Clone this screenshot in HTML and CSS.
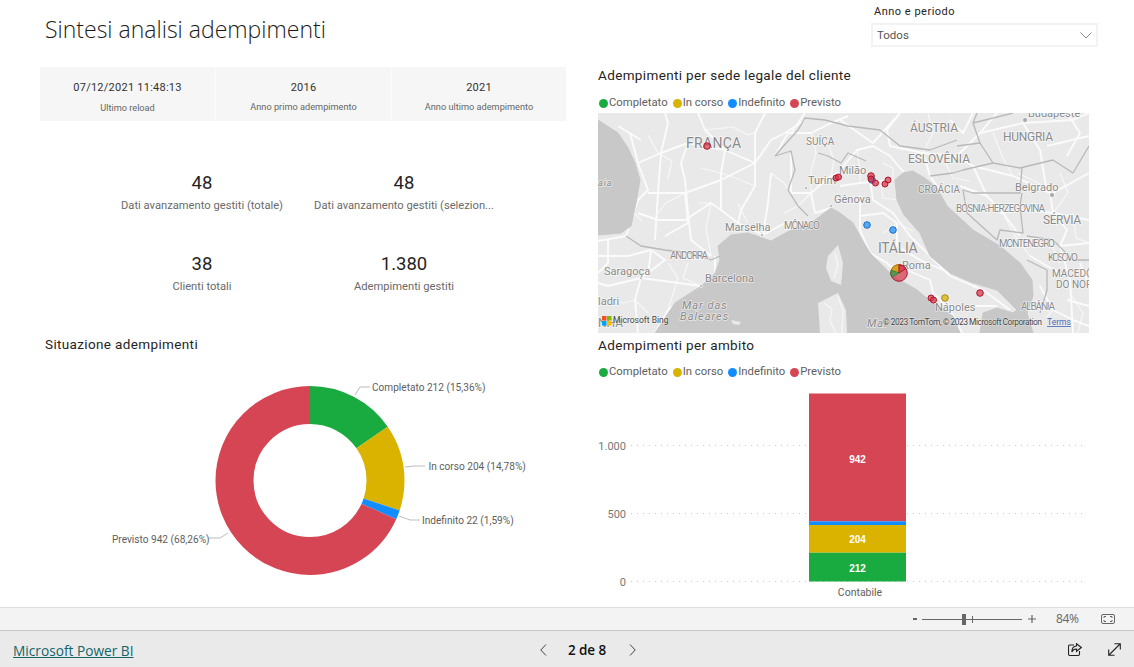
FILE: index.html
```html
<!DOCTYPE html>
<html lang="it">
<head>
<meta charset="utf-8">
<title>Sintesi analisi adempimenti</title>
<link rel="stylesheet" href="styles.css">
</head>
<body>
<main class="report">
  <section class="col-left">
    <h1 class="page-title">Sintesi analisi adempimenti</h1>
    <div class="strip">
      <div class="strip-cell"><div class="strip-value">07/12/2021 11:48:13</div><div class="strip-label strip-label-first">Ultimo reload</div></div>
      <div class="strip-cell"><div class="strip-value">2016</div><div class="strip-label">Anno primo adempimento</div></div>
      <div class="strip-cell"><div class="strip-value">2021</div><div class="strip-label">Anno ultimo adempimento</div></div>
    </div>
    <div class="kpis">
      <div class="kpi"><div class="kpi-value">48</div><div class="kpi-label">Dati avanzamento gestiti (totale)</div></div>
      <div class="kpi"><div class="kpi-value">48</div><div class="kpi-label">Dati avanzamento gestiti (selezion...</div></div>
      <div class="kpi"><div class="kpi-value">38</div><div class="kpi-label">Clienti totali</div></div>
      <div class="kpi"><div class="kpi-value">1.380</div><div class="kpi-label">Adempimenti gestiti</div></div>
    </div>
    <h2 class="visual-title donut-title">Situazione adempimenti</h2>
    <svg class="donut" viewBox="0 0 598 247" width="598" height="247">
      <g transform="translate(310 120.5) rotate(-90)" fill="none" stroke-width="38">
        <circle class="s-green" r="75.5" pathLength="100" stroke-dasharray="15.36 84.64"/>
        <circle class="s-yellow" r="75.5" pathLength="100" stroke-dasharray="14.78 85.22" stroke-dashoffset="-15.36"/>
        <circle class="s-blue" r="75.5" pathLength="100" stroke-dasharray="1.59 98.41" stroke-dashoffset="-30.14"/>
        <circle class="s-red" r="75.5" pathLength="100" stroke-dasharray="68.27 31.73" stroke-dashoffset="-31.73"/>
      </g>
      <g class="leader">
        <polyline points="355,35 360,27 370,27"/>
        <polyline points="405,107 414,106 425,106"/>
        <polyline points="399,156 410,160 420,160"/>
        <polyline points="209,178 220,178 228,173"/>
      </g>
      <g class="donut-label">
        <text x="372" y="31">Completato 212 (15,36%)</text>
        <text x="428.500" y="110">In corso 204 (14,78%)</text>
        <text x="422" y="164">Indefinito 22 (1,59%)</text>
        <text x="112" y="183">Previsto 942 (68,26%)</text>
      </g>
    </svg>
  </section>

  <section class="col-right">
    <div class="filter">
      <div class="filter-label">Anno e periodo</div>
      <div class="filter-box">
        <span>Todos</span>
        <svg class="filter-chevron" viewBox="0 0 12 7" width="12" height="7"><polyline points="0.500,0.500 6,6 11.500,0.500"/></svg>
      </div>
    </div>
    <h2 class="visual-title map-title">Adempimenti per sede legale del cliente</h2>
    <ul class="legend">
      <li class="legend-item"><i class="dot bg-green"></i>Completato</li>
      <li class="legend-item"><i class="dot bg-yellow"></i>In corso</li>
      <li class="legend-item"><i class="dot bg-blue"></i>Indefinito</li>
      <li class="legend-item"><i class="dot bg-red"></i>Previsto</li>
    </ul>
    <svg class="map" viewBox="0 0 491 220" width="491" height="220">
      <rect class="land" width="491" height="220"/>
      <g class="roads-thin">
        <polyline points="20,60 30,72 28,92 44,108"/>
        <polyline points="50,22 60,40 74,48 70,66"/>
        <polyline points="107,17 135,14 150,22 157,20"/>
        <polyline points="60,100 68,90 87,80"/>
        <polyline points="103,55 123,60 140,66 157,73"/>
        <polyline points="100,90 113,90 108,115 113,143"/>
        <polyline points="140,90 143,97 150,110"/>
        <polyline points="173,60 186,70 193,80"/>
        <polyline points="186,100 200,93 213,80"/>
        <polyline points="213,20 218,40 213,58 213,80"/>
        <polyline points="230,30 236,48 233,63"/>
        <polyline points="70,150 80,165 70,197"/>
        <polyline points="10,185 25,190 37,187 50,200"/>
        <polyline points="90,150 85,165 103,173"/>
        <polyline points="259,37 262,57 262,70"/>
        <polyline points="285,50 295,55 295,67"/>
        <polyline points="282,67 285,85 300,87 312,100"/>
        <polyline points="285,120 299,110 315,118"/>
        <polyline points="325,128 335,118 340,135 352,160"/>
        <polyline points="375,175 385,165 365,160"/>
        <polyline points="330,0 335,20 325,40"/>
        <polyline points="345,45 355,65 372,68"/>
        <polyline points="395,20 405,45 415,63"/>
        <polyline points="420,60 440,70 452,80"/>
        <polyline points="405,100 415,120 432,143"/>
        <polyline points="462,60 470,80 455,100"/>
        <polyline points="475,100 478,125 491,130"/>
        <polyline points="449,125 458,140 462,150"/>
        <polyline points="472,180 485,200 480,220"/>
        <polyline points="448,205 455,197"/>
      </g>
      <g class="roads">
        <polyline points="0,128 28,123 40,87 50,77 40,50 32,20"/>
        <polyline points="50,80 67,80 87,80 123,67 157,50 173,27 187,20 207,7"/>
        <polyline points="90,30 83,50 87,67 90,100 93,127 113,143"/>
        <polyline points="40,50 63,40 90,30 127,37 157,50"/>
        <polyline points="127,37 123,60 123,97 140,110"/>
        <polyline points="157,50 157,73 143,97 140,110 165,122"/>
        <polyline points="173,60 170,90 165,122 187,110"/>
        <polyline points="100,0 107,17 127,37"/>
        <polyline points="43,27 20,13"/>
        <polyline points="167,0 157,20 157,50"/>
        <polyline points="67,0 70,10 63,40 60,80 57,127"/>
        <polyline points="40,100 60,107 87,107 113,90 123,97"/>
        <polyline points="87,80 90,110 67,123"/>
        <polyline points="117,143 117,160 103,173 70,197 57,220"/>
        <polyline points="0,143 30,143 53,137 67,147 43,165 103,173"/>
        <polyline points="43,165 10,173 0,170"/>
        <polyline points="43,165 37,187 40,220"/>
        <polyline points="53,137 50,163"/>
        <polyline points="10,127 10,150 0,160"/>
        <polyline points="177,43 190,20 213,20 233,10 250,3"/>
        <polyline points="193,40 193,80 213,80 233,63 250,57"/>
        <polyline points="213,80 217,100 233,95"/>
        <polyline points="207,0 193,20"/>
        <polyline points="242,73 262,70 295,67"/>
        <polyline points="242,57 259,37 275,33 292,43 309,63"/>
        <polyline points="272,67 275,87 295,100 312,123 332,143 352,163 385,177 412,197"/>
        <polyline points="262,83 262,117 272,140 289,150 302,163"/>
        <polyline points="262,103 285,100 299,110 299,133 322,147 352,160"/>
        <polyline points="309,157 332,167 335,180 352,197 364,220"/>
        <polyline points="352,197 375,193 399,193"/>
        <polyline points="302,0 289,17 292,33 325,40 359,43 375,53 415,63 452,80 455,100 469,117 462,133 472,167 475,220"/>
        <polyline points="325,40 332,63 342,77"/>
        <polyline points="359,43 382,20 425,10"/>
        <polyline points="425,10 442,37 449,80"/>
        <polyline points="425,10 475,7 491,0"/>
        <polyline points="375,53 389,83 405,100 422,123"/>
        <polyline points="362,73 389,83"/>
        <polyline points="402,100 429,97 455,100"/>
        <polyline points="455,100 491,107"/>
        <polyline points="462,133 491,130"/>
        <polyline points="432,143 449,153 469,163"/>
        <polyline points="442,173 455,197 475,207 491,213"/>
        <polyline points="242,7 275,30 302,0"/>
        <polyline points="455,80 491,60"/>
        <polyline points="449,33 491,23"/>
        <polyline points="352,7 365,20 375,0"/>
        <polyline points="399,0 382,20"/>
        <polyline points="469,0 482,20 469,43"/>
        <polyline points="482,150 491,173"/>
        <polyline points="469,187 491,193"/>
      </g>
      <g class="water">
        <path d="M0,7 L20,20 L30,35 L37,50 L42,67 L38,90 L33,113 L23,120 L0,122 Z"/>
        <path d="M57,220 L77,190 L103,173 L117,160 L122,147 L120,133 L133,122 L150,120 L173,128 L193,117 L213,110 L233,95 L242,100 L255,110 L262,123 L272,140 L295,163 L319,177 L335,190 L355,203 L362,220 Z"/>
        <path d="M297,67 L305,60 L315,58 L328,66 L339,75 L349,93 L375,117 L402,133 L422,150 L434,167 L435,183 L429,200 L435,220 L382,220 L385,200 L399,195 L415,200 L419,197 L399,177 L375,170 L352,160 L332,143 L322,120 L306,102 L299,87 Z"/>
      </g>
      <g class="land-shape">
        <path d="M240,132 L245,150 L243,172 L233,168 L228,155 L230,143 Z"/>
        <path d="M220,190 L240,180 L248,197 L249,220 L222,220 Z"/>
        <path d="M133,207 L143,209 L141,212 L135,211 Z"/>
      </g>
      <g class="roads-thin">
        <polyline points="237,140 240,152 236,165"/>
        <polyline points="226,190 234,196 232,208 238,220"/>
        <polyline points="240,183 245,198 244,220"/>
      </g>
      <g class="borders">
        <polyline points="28,123 43,133 67,137 93,140 113,147 122,143"/>
        <polyline points="177,43 182,37 200,17 207,5 227,7 250,13 282,17"/>
        <polyline points="177,43 193,38 197,57 190,77 200,93 210,103"/>
        <polyline points="220,40 230,43 243,50 250,40 268,48"/>
        <polyline points="282,17 302,33 332,37 359,27"/>
        <polyline points="359,33 382,30 395,50 422,55 455,47 475,60 491,33"/>
        <polyline points="375,10 382,30"/>
        <polyline points="379,0 375,10 415,0"/>
        <polyline points="332,63 355,60 365,57 395,50"/>
        <polyline points="365,77 375,80 422,80 424,55"/>
        <polyline points="365,77 369,100 399,127 402,117 425,120 422,93 424,80"/>
        <polyline points="429,123 455,127 475,147 491,147"/>
        <polyline points="429,147 449,157 449,177 442,200"/>
      </g>
      <g class="cities">
        <circle cx="43" cy="165" r="1.500"/><circle cx="103" cy="173" r="1.500"/>
        <circle cx="164" cy="122" r="1.500"/><circle cx="208" cy="75" r="1.500"/>
        <circle cx="233" cy="93" r="1.500"/><circle cx="427" cy="7" r="2.500"/>
        <circle cx="454" cy="82" r="2.500"/>
      </g>
      <g class="map-label">
        <text class="ml-l" x="88" y="35">FRANÇA</text>
        <text class="ml-m" x="312" y="19" textLength="48">ÁUSTRIA</text>
        <text class="ml-m" x="405" y="28" textLength="50">HUNGRIA</text>
        <text class="ml-s" x="430" y="4">Budapeste</text>
        <text class="ml-s ml-caps" x="208" y="32">SUÍÇA</text>
        <text class="ml-s" x="241" y="61">Milão</text>
        <text class="ml-s" x="210" y="71">Turim</text>
        <text class="ml-m" x="310" y="50" textLength="62">ESLOVÊNIA</text>
        <text class="ml-s ml-caps" x="320" y="80" textLength="42">CROÁCIA</text>
        <text class="ml-s" x="417" y="78">Belgrado</text>
        <text class="ml-xs" x="358" y="99" textLength="89">BÓSNIA-HERZEGOVINA</text>
        <text class="ml-m" x="445" y="111" textLength="38">SÉRVIA</text>
        <text class="ml-s" x="236" y="90">Gênova</text>
        <text class="ml-s" x="127" y="118">Marselha</text>
        <text class="ml-xs" x="186" y="116" textLength="36">MÔNACO</text>
        <text class="ml-l" x="280" y="140" textLength="40">ITÁLIA</text>
        <text class="ml-xs" x="401" y="134" textLength="56">MONTENEGRO</text>
        <text class="ml-xs" x="450" y="148" textLength="30">KOSOVO</text>
        <text class="ml-xs" x="454" y="164">MACEDÔN</text>
        <text class="ml-xs" x="458" y="175">DO NORT</text>
        <text class="ml-s" x="304" y="156">Roma</text>
        <text class="ml-xs" x="72" y="146" textLength="38">ANDORRA</text>
        <text class="ml-s" x="6" y="162">Saragoça</text>
        <text class="ml-s" x="107" y="169">Barcelona</text>
        <text class="ml-s" x="0" y="192">ladri</text>
        <text class="ml-s" x="337" y="198">Nápoles</text>
        <text class="ml-xs" x="423" y="197" textLength="34">ALBÂNIA</text>
        <text class="ml-sea ml-sm" x="0" y="73">aia</text>
        <text class="ml-sea" x="84" y="196">Mar das</text>
        <text class="ml-sea" x="82" y="207">Baleares</text>
        <text class="ml-sea" x="269" y="214">Mar</text>
        <text class="ml-m" x="0" y="214">NHA</text>
      </g>
      <g class="bubble-s">
        <circle cx="109" cy="33" r="3.300" class="b-red"/>
        <circle cx="238" cy="65" r="3" class="b-red"/><circle cx="240.500" cy="64" r="3" class="b-red"/>
        <circle cx="274" cy="67" r="3.300" class="b-blue"/>
        <circle cx="273" cy="63" r="3.300" class="b-red"/><circle cx="273" cy="66" r="3" class="b-red"/>
        <circle cx="277.500" cy="70" r="3" class="b-red"/>
        <circle cx="287" cy="71" r="3" class="b-red"/><circle cx="290" cy="67" r="3" class="b-red"/>
        <circle cx="269" cy="112" r="3.300" class="b-blue"/><circle cx="295" cy="117" r="3.300" class="b-blue"/>
        <circle cx="333" cy="185" r="3" class="b-red"/><circle cx="335.500" cy="187" r="3" class="b-red"/>
        <circle cx="347" cy="185" r="3.300" class="b-yellow"/>
        <circle cx="382" cy="180" r="3.300" class="b-red"/>
      </g>
      <g class="pie">
        <circle cx="301" cy="160" r="8.300" class="b-red"/>
        <path d="M301,160 L293.200,157.200 A8.300,8.300 0 0 1 301,151.700 Z" class="b-yellow"/>
        <path d="M301,160 L293.900,164.300 A8.300,8.300 0 0 1 293.200,157.200 Z" class="b-green"/>
        <path d="M301,160 L301,151.700 A8.300,8.300 0 0 1 308,155.600 Z" class="b-red"/>
      </g>
      <g class="bing-logo">
        <rect class="ms-r" x="4" y="203" width="4.500" height="4.500"/>
        <rect class="ms-g" x="9" y="203" width="4.500" height="4.500"/>
        <rect class="ms-b" x="4" y="208" width="4.500" height="4.500"/>
        <rect class="ms-y" x="9" y="208" width="4.500" height="4.500"/>
      </g>
      <text class="map-credit" x="15" y="210">Microsoft Bing</text>
      <text class="map-credit" x="285" y="212" textLength="159">© 2023 TomTom, © 2023 Microsoft Corporation</text>
      <text class="map-terms" x="449" y="212">Terms</text>
    </svg>
    <h2 class="visual-title bar-title">Adempimenti per ambito</h2>
    <ul class="legend">
      <li class="legend-item"><i class="dot bg-green"></i>Completato</li>
      <li class="legend-item"><i class="dot bg-yellow"></i>In corso</li>
      <li class="legend-item"><i class="dot bg-blue"></i>Indefinito</li>
      <li class="legend-item"><i class="dot bg-red"></i>Previsto</li>
    </ul>
    <svg class="bars" viewBox="0 0 491 227" width="491" height="227">
      <g class="gridline">
        <line x1="33" x2="489" y1="65.500" y2="65.500"/>
        <line x1="33" x2="489" y1="133.500" y2="133.500"/>
        <line x1="33" x2="489" y1="201.500" y2="201.500"/>
      </g>
      <g class="axis">
        <text x="28" y="69.500">1.000</text>
        <text x="28" y="137.500">500</text>
        <text x="28" y="205.500">0</text>
        <text class="axis-cat" x="262" y="216">Contabile</text>
      </g>
      <rect class="f-red" x="211" y="13.500" width="97" height="127.800"/>
      <rect class="f-blue" x="211" y="141.300" width="97" height="3.700"/>
      <rect class="f-yellow" x="211" y="145" width="97" height="27.700"/>
      <rect class="f-green" x="211" y="172.700" width="97" height="28.800"/>
      <g class="bar-value">
        <text x="259.500" y="83">942</text>
        <text x="259.500" y="163">204</text>
        <text x="259.500" y="192">212</text>
      </g>
    </svg>
  </section>
</main>

<div class="zoombar">
  <span class="zoom-minus"></span>
  <div class="zoom-track"><span class="zoom-tick"></span><span class="zoom-thumb"></span></div>
  <svg class="zoom-plus" viewBox="0 0 8 8" width="8" height="8"><path d="M4,0 V8 M0,4 H8"/></svg>
  <span class="zoom-pct">84%</span>
  <svg class="zoom-fit" viewBox="0 0 14 10" width="14" height="10"><rect x="0.500" y="0.500" width="13" height="9" rx="1.500"/><path d="M3,4 V2.500 H5 M9,2.500 H11 V4 M11,6 V7.500 H9 M5,7.500 H3 V6"/></svg>
</div>

<footer class="footer">
  <a class="brand" href="#">Microsoft Power BI</a>
  <nav class="pager">
    <svg class="chev" viewBox="0 0 7 12" width="7" height="12"><polyline points="6,0.500 0.800,6 6,11.500"/></svg>
    <span class="pager-text">2 de 8</span>
    <svg class="chev chev-next" viewBox="0 0 7 12" width="7" height="12"><polyline points="1,0.500 6.200,6 1,11.500"/></svg>
  </nav>
  <div class="footer-actions">
    <svg class="act" viewBox="0 0 14 13" width="14" height="13"><path d="M6,2 H2 A1.500,1.500 0 0 0 0.500,3.500 V11 A1.500,1.500 0 0 0 2,12.500 H10 A1.500,1.500 0 0 0 11.500,11 V8"/><path d="M8.500,0.700 L13.300,4.500 L8.500,8.300 V6 C6,6 4.600,7 3.800,9 C3.800,5.500 5.500,3.200 8.500,3 Z"/></svg>
    <svg class="act" viewBox="0 0 13 13" width="13" height="13"><path d="M1,12 L12,1 M6.500,0.700 H12.300 V6.500 M0.700,6.500 V12.300 H6.500"/></svg>
  </div>
</footer>
</body>
</html>
```
FILE: styles.css
```css
* { box-sizing: border-box; }
html, body { margin: 0; padding: 0; }
body {
  width: 1134px;
  height: 667px;
  overflow: hidden;
  background: #fff;
  font-family: Roboto, "Liberation Sans", sans-serif;
  color: #252423;
  display: flex;
  flex-direction: column;
}
.report {
  height: 607px;
  display: grid;
  grid-template-columns: 598px 536px;
  overflow: hidden;
}
.col-left, .col-right { display: flex; flex-direction: column; min-width: 0; }

.page-title {
  margin: 0;
  height: 67px;
  padding: 14px 0 0 45px;
  font: 300 23px/30px "Open Sans", sans-serif;
  color: #1c1b1a;
}
.strip {
  margin-left: 40px;
  width: 526px;
  height: 54px;
  display: grid;
  grid-template-columns: 175px 176px 175px;
  background: #f6f6f6;
}
.strip-cell {
  display: flex;
  flex-direction: column;
  align-items: center;
  padding-top: 14px;
  border-left: 1px solid #fbfbfb;
}
.strip-cell:first-child { border-left: 0; }
.strip-value { font-size: 11px; line-height: 14px; letter-spacing: .25px; color: #333; }
.strip-label { margin-top: 5px; font-size: 9.200px; line-height: 14px; color: #666; }
.strip-label-first { margin-top: 6px; }

.kpis {
  margin: 50px 0 0 101px;
  width: 404px;
  display: grid;
  grid-template-columns: 202px 202px;
  grid-auto-rows: 81px;
}
.kpi { display: flex; flex-direction: column; align-items: center; gap: 3px; }
.kpi-value { font-size: 18.500px; line-height: 24px; color: #252423; }
.kpi-label { font-size: 11.200px; line-height: 16px; color: #6a6a6a; white-space: nowrap; }

.visual-title {
  margin: 0;
  font-size: 13.500px;
  font-weight: 400;
  line-height: 18px;
  letter-spacing: .36px;
  color: #252423;
}
.donut-title { margin: 2px 0 0 45px; }
.donut { display: block; margin-top: 7px; flex: none; }
.s-green { stroke: #1aab40; }
.s-yellow { stroke: #d9b300; }
.s-blue { stroke: #118dff; }
.s-red { stroke: #d64554; }
.leader polyline { fill: none; stroke: #bdbdbd; stroke-width: 1; }
.donut-label text { font-size: 10.100px; fill: #605e5c; }

.filter { margin-left: 273px; width: 227px; height: 66px; flex: none; padding-top: 5px; }
.filter-label { font-size: 11px; line-height: 14px; letter-spacing: .5px; padding-left: 3px; color: #252423; }
.filter-box {
  margin-top: 4px;
  height: 24px;
  border: 2px solid #f3f3f3;
  display: flex;
  align-items: center;
  justify-content: space-between;
  padding: 0 4px;
  font-size: 11.500px;
  color: #555;
}
.filter-chevron polyline { fill: none; stroke: #888; stroke-width: 1; }

.legend {
  list-style: none;
  margin: 0;
  padding: 0 0 0 1px;
  display: flex;
  gap: 5px;
  font-size: 11.300px;
  line-height: 14px;
  color: #605e5c;
}
.legend-item { display: flex; align-items: center; gap: 1px; }
.dot { width: 9px; height: 9px; border-radius: 50%; display: block; }
.bg-green { background: #1aab40; }
.bg-yellow { background: #d9b300; }
.bg-blue { background: #118dff; }
.bg-red { background: #d64554; }

.map-title { margin-bottom: 12px; }
.map { display: block; flex: none; margin-top: 3px; }
.land, .land-shape path { fill: #e9e9e9; }
.water path { fill: #c8c8c8; stroke: #c8c8c8; stroke-width: 1; stroke-linejoin: round; }
.roads polyline { fill: none; stroke: #fbfbfb; stroke-width: 1.900; stroke-linejoin: round; }
.roads-thin polyline { fill: none; stroke: #f7f7f7; stroke-width: 1.200; stroke-linejoin: round; }
.borders polyline { fill: none; stroke: #b9b9b9; stroke-width: 1.300; stroke-linejoin: round; }
.cities circle { fill: #a8a8a8; stroke: #fff; stroke-width: .8; }
.map-label text { fill: #8a8a8a; font-family: Roboto, sans-serif; paint-order: stroke; stroke: rgba(255,255,255,.6); stroke-width: 1.500px; }
.ml-l { font-size: 14px; letter-spacing: .3px; }
.ml-m { font-size: 12px; }
.ml-s { font-size: 11px; }
.ml-xs { font-size: 10px; }
.ml-caps { font-size: 10px; }
.map-label .ml-sea { font-size: 11px; font-style: italic; letter-spacing: 1px; }
.map-label .ml-sm { font-size: 9px; }
.b-red { fill: rgba(214,55,75,.72); stroke: #b3142a; stroke-width: 1; }
.b-blue { fill: rgba(17,141,255,.7); stroke: #1a6fc0; stroke-width: 1; }
.b-yellow { fill: rgba(217,179,0,.75); stroke: #a98c10; stroke-width: 1; }
.b-green { fill: rgba(26,171,64,.65); stroke: #1a8a3a; stroke-width: .8; }
.ms-r { fill: #f25022; }
.ms-g { fill: #7fba00; }
.ms-b { fill: #00a4ef; }
.ms-y { fill: #ffb900; }
.map-credit { font-size: 8.500px; fill: #444; stroke: rgba(255,255,255,.5); stroke-width: 1px; paint-order: stroke; }
.map-terms { font-size: 8.500px; fill: #4d6cc0; text-decoration: underline; }

.bar-title { margin-top: 3px; margin-bottom: 11px; }
.bars { display: block; flex: none; margin-top: 1px; }
.gridline line { stroke: #c8c8c8; stroke-width: 1; stroke-dasharray: 1 5; }
.axis text { font-size: 11px; fill: #777; text-anchor: end; }
.axis .axis-cat { text-anchor: middle; fill: #605e5c; font-size: 10.500px; }
.f-red { fill: #d64554; }
.f-blue { fill: #118dff; }
.f-yellow { fill: #d9b300; }
.f-green { fill: #1aab40; }
.bar-value text { font: 700 10px "Liberation Sans", sans-serif; fill: #fff; text-anchor: middle; }

.zoombar {
  height: 24px;
  flex: none;
  background: #f3f3f3;
  border-top: 1px solid #e0e0e0;
  border-bottom: 1px solid #c8c8c8;
  display: flex;
  align-items: center;
  padding-left: 913px;
}
.zoom-minus { width: 4px; height: 2px; background: #666; }
.zoom-track { position: relative; margin-left: 5px; width: 100px; height: 1px; background: #666; }
.zoom-tick { position: absolute; left: 50px; top: -3px; width: 1px; height: 7px; background: #666; }
.zoom-thumb { position: absolute; left: 40px; top: -5px; width: 4px; height: 11px; background: #666; }
.zoom-plus { margin-left: 6px; }
.zoom-plus path { fill: none; stroke: #666; stroke-width: 1.200; }
.zoom-pct { margin-left: 20px; width: 23px; font: 12px/16px "Open Sans", sans-serif; color: #666; letter-spacing: -.3px; }
.zoom-fit { margin-left: 22px; }
.zoom-fit rect, .zoom-fit path { fill: none; stroke: #666; stroke-width: 1; }

.footer {
  flex: 1;
  background: #eaeaea;
  display: flex;
  align-items: center;
  padding: 4px 0 0 13px;
}
.brand {
  width: 120px;
  font: 13.700px/18px "Open Sans", sans-serif;
  color: #11666b;
  white-space: nowrap;
  text-decoration: underline;
}
.pager { margin: -3px 0 0 407px; display: flex; align-items: center; gap: 21px; }
.pager-text { font: 600 13.500px/18px "Open Sans", sans-serif; color: #111; letter-spacing: -.1px; white-space: nowrap; }
.chev-next { margin-left: 2px; }
.chev polyline { fill: none; stroke: #444; stroke-width: 1; }
.footer-actions { margin: -4px 0 0 auto; padding-right: 13px; display: flex; gap: 26px; align-items: center; }
.act path { fill: none; stroke: #222; stroke-width: 1.100; }
```
